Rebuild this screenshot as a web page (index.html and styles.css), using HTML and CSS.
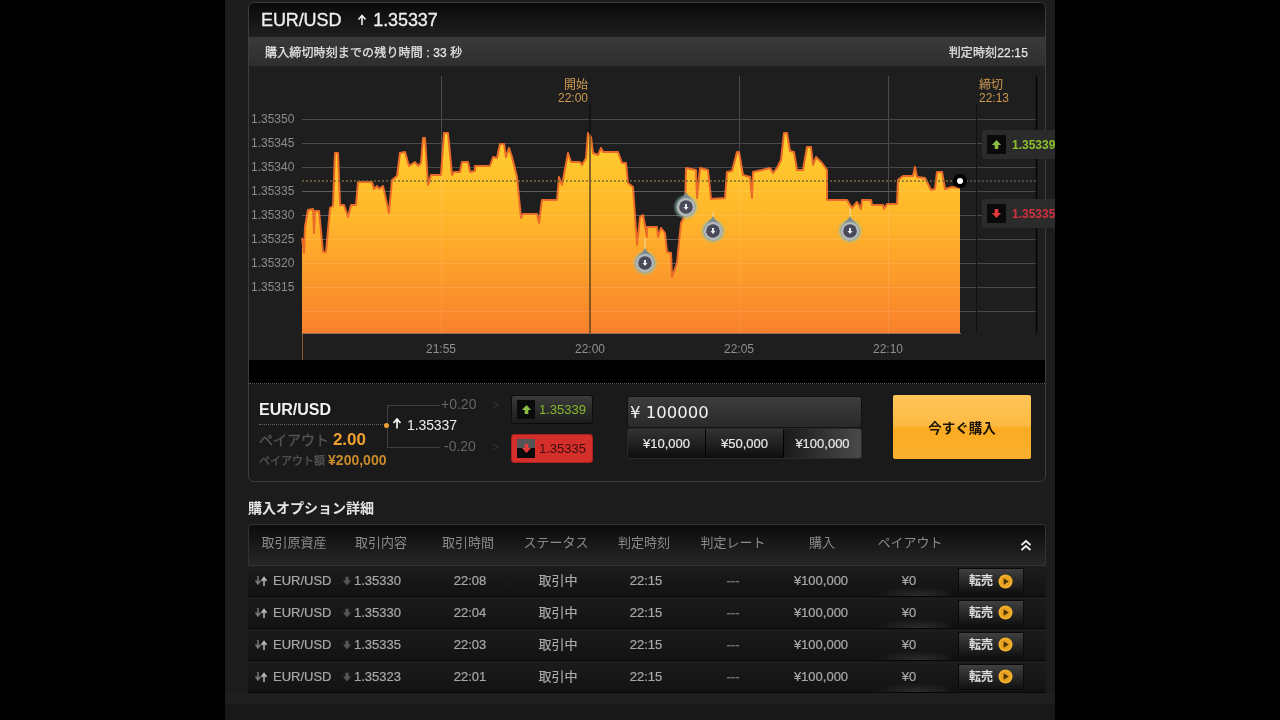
FILE: index.html
```html
<!DOCTYPE html>
<html lang="ja">
<head>
<meta charset="utf-8">
<title>EUR/USD</title>
<link rel="stylesheet" href="styles.css">
</head>
<body>
<svg class="defs" width="0" height="0" aria-hidden="true">
  <defs>
    <linearGradient id="area" x1="0" y1="133" x2="0" y2="333" gradientUnits="userSpaceOnUse">
      <stop offset="0" stop-color="#ffd02f"/>
      <stop offset=".45" stop-color="#ffb42a"/>
      <stop offset="1" stop-color="#f9802c"/>
    </linearGradient>
    <radialGradient id="halo">
      <stop offset=".7" stop-color="#8fc0b4" stop-opacity=".75"/>
      <stop offset="1" stop-color="#8fc0b4" stop-opacity="0"/>
    </radialGradient>
    <symbol id="pin" viewBox="-13 -17 26 30" overflow="visible">
      <circle r="13" fill="url(#halo)"/>
      <path d="M0-15C2-10 9.500-7 9.500 0A9.500 9.500 0 0 1-9.500 0C-9.500-7-2-10 0-15Z" fill="#7d8a8e"/>
      <circle r="9.200" fill="#b4b8b8"/>
      <circle r="6.800" fill="#4a4a5a"/>
      <path d="M-1-3H1V0H2.500L0 3-2.500 0H-1Z" fill="#eee"/>
    </symbol>
    <symbol id="up" viewBox="0 0 12 12"><path d="M6 1 11 6.500H8V11H4V6.500H1Z"/></symbol>
    <symbol id="down" viewBox="0 0 12 12"><path d="M6 11 11 5.500H8V1H4V5.500H1Z"/></symbol>
    <symbol id="thin-up" viewBox="0 0 10 12"><path d="M5 11V2M1.500 5.500 5 1.500 8.500 5.500" fill="none" stroke="currentColor" stroke-width="1.600"/></symbol>
    <symbol id="pair" viewBox="0 0 14 12">
      <path d="M4 1V8M1.500 5.500 4 9 6.500 5.500" fill="none" stroke="#777" stroke-width="1.500"/>
      <path d="M10 11V3M7.500 6 10 2.500 12.500 6" fill="none" stroke="#bbb" stroke-width="1.500"/>
    </symbol>
    <symbol id="sell" viewBox="0 0 16 16">
      <circle cx="8" cy="8" r="7.500" fill="#f2b02c"/>
      <circle cx="8" cy="8" r="5.500" fill="#e9a21f"/>
      <path d="M6 4.500 11.500 8 6 11.500Z" fill="#4a3208"/>
    </symbol>
    <symbol id="dbl-up" viewBox="0 0 12 12">
      <path d="M1.500 5.500 6 1.500 10.500 5.500M1.500 10.500 6 6.500 10.500 10.500" fill="none" stroke="currentColor" stroke-width="1.800"/>
    </symbol>
  </defs>
</svg>

<div class="page">
  <section class="panel">
    <header class="head">
      <span class="pair-name">EUR/USD</span>
      <svg class="head-arrow"><use href="#thin-up"/></svg>
      <span class="head-rate">1.35337</span>
    </header>
    <div class="sub">
      <span>購入締切時刻までの残り時間 : 33 秒</span>
      <span>判定時刻22:15</span>
    </div>

    <div class="chart">
      <svg class="plot" width="798" height="294" viewBox="248 66 798 294">
        <g class="grid">
          <path d="M302 119H1036M302 143H1036M302 167H1036M302 191H1036M302 215H1036M302 239H1036M302 263H1036M302 287H1036M302 311H1036"/>
          <path d="M441 76V333M739 76V333M888 76V333"/>
        </g>
        <path class="area" d="M302 238L304 253 305 227 308 210 313 209 314 233 315 211 319 211 323 252 326 252 330 208 333 206 335 153 338 153 340 205 344 205 348 217 351 205 356 205 358 182 372 182 374 189 377 186 379 189 383 186 389 213 392 180 397 176 400 153 405 152 409 166 415 162 418 166 421 163 423 138 425 138 428 185 431 175 441 175 444 133 448 133 452 175 454 172 460 172 462 162 468 162 470 172 475 171 475 166 490 166 493 157 497 158 500 144 504 144 506 157 509 148 512 157 517 177 521 218 523 214 537 214 539 223 542 200 557 200 559 177 562 185 568 153 571 162 580 162 582 165 586 158 588 133 591 137 593 153 598 155 601 148 603 152 618 152 622 163 626 163 628 183 633 187 637 245 640 217 643 215 647 237 647 227 657 227 658 237 661 228 665 233 667 252 671 253 672 277 677 263 681 223 685 215 686 168 696 170 697 198 700 168 708 170 711 199 725 198 727 172 732 171 737 152 739 152 743 175 750 177 752 198 753 172 762 170 770 168 773 173 777 168 781 160 784 133 787 133 790 151 794 152 797 170 803 170 807 147 811 147 813 165 816 157 822 163 827 170 827 200 847 200 852 208 857 202 861 209 862 200 871 200 872 205 883 205 884 209 887 204 897 204 898 180 903 176 913 176 915 167 917 177 925 178 931 190 935 189 937 172 942 172 945 189 952 187 960 188V333H302Z"/>
        <path class="area-edge" d="M302 238L304 253 305 227 308 210 313 209 314 233 315 211 319 211 323 252 326 252 330 208 333 206 335 153 338 153 340 205 344 205 348 217 351 205 356 205 358 182 372 182 374 189 377 186 379 189 383 186 389 213 392 180 397 176 400 153 405 152 409 166 415 162 418 166 421 163 423 138 425 138 428 185 431 175 441 175 444 133 448 133 452 175 454 172 460 172 462 162 468 162 470 172 475 171 475 166 490 166 493 157 497 158 500 144 504 144 506 157 509 148 512 157 517 177 521 218 523 214 537 214 539 223 542 200 557 200 559 177 562 185 568 153 571 162 580 162 582 165 586 158 588 133 591 137 593 153 598 155 601 148 603 152 618 152 622 163 626 163 628 183 633 187 637 245 640 217 643 215 647 237 647 227 657 227 658 237 661 228 665 233 667 252 671 253 672 277 677 263 681 223 685 215 686 168 696 170 697 198 700 168 708 170 711 199 725 198 727 172 732 171 737 152 739 152 743 175 750 177 752 198 753 172 762 170 770 168 773 173 777 168 781 160 784 133 787 133 790 151 794 152 797 170 803 170 807 147 811 147 813 165 816 157 822 163 827 170 827 200 847 200 852 208 857 202 861 209 862 200 871 200 872 205 883 205 884 209 887 204 897 204 898 180 903 176 913 176 915 167 917 177 925 178 931 190 935 189 937 172 942 172 945 189 952 187 960 188"/>
        <path class="grid-over" d="M302 191H960M302 215H960M302 239H960M302 263H960M302 287H960M302 311H960M441 175V333M739 152V333M888 204V333"/>
        <path class="axis" d="M302 333.500H961"/>
        <path class="open-top" d="M590 104V134"/>
        <path class="open-line" d="M590 134V333"/>
        <path class="close-line" d="M976.500 104V333"/>
        <path class="limit-line" d="M1036.500 76V333"/>
        <path class="tick" d="M302.500 334V360"/>
        <path class="now" d="M302 181H1036"/>
        <path class="now-over" d="M302 181H960"/>
        <path class="pin-stem" d="M645 238V250M713 212V220M850 208V218"/>
        <use href="#pin" x="632" y="246" width="26" height="30"/>
        <use href="#pin" x="673" y="190" width="26" height="30"/>
        <use href="#pin" x="700" y="214" width="26" height="30"/>
        <use href="#pin" x="837" y="214" width="26" height="30"/>
        <circle cx="960" cy="181" r="7" fill="#000"/>
        <circle cx="960" cy="181" r="3" fill="#fff"/>
        <g class="price-labels">
          <text x="251" y="123">1.35350</text>
          <text x="251" y="147">1.35345</text>
          <text x="251" y="171">1.35340</text>
          <text x="251" y="195">1.35335</text>
          <text x="251" y="219">1.35330</text>
          <text x="251" y="243">1.35325</text>
          <text x="251" y="267">1.35320</text>
          <text x="251" y="291">1.35315</text>
        </g>
        <g class="time-labels">
          <text x="441" y="353">21:55</text>
          <text x="590" y="353">22:00</text>
          <text x="739" y="353">22:05</text>
          <text x="888" y="353">22:10</text>
        </g>
        <g class="mark-labels">
          <text x="588" y="89" text-anchor="end">開始</text>
          <text x="588" y="102" text-anchor="end">22:00</text>
          <text x="979" y="89">締切</text>
          <text x="979" y="102">22:13</text>
        </g>
      </svg>
      <div class="tag tag-up">
        <span class="tag-icon"><svg class="i12 green"><use href="#up"/></svg></span>
        <span>1.35339</span>
      </div>
      <div class="tag tag-down">
        <span class="tag-icon"><svg class="i12 red"><use href="#down"/></svg></span>
        <span>1.35335</span>
      </div>
    </div>
    <div class="band"></div>

    <div class="order">
      <div class="order-info">
        <div class="order-pair">EUR/USD</div>
        <div class="order-pay"><span class="muted">ペイアウト</span> <b>2.00</b></div>
        <div class="order-amt"><span class="muted">ペイアウト額</span> <b>¥200,000</b></div>
      </div>
      <div class="spread">
        <i class="spread-dot"></i>
        <span class="spread-top">+0.20</span>
        <span class="spread-rate"><svg class="i-thin"><use href="#thin-up"/></svg>1.35337</span>
        <span class="spread-bot">-0.20</span>
        <span class="chev chev-top">&gt;</span>
        <span class="chev chev-bot">&gt;</span>
      </div>
      <div class="rates">
        <div class="rate rate-up">
          <span class="rate-icon"><svg class="i12 green"><use href="#up"/></svg></span>1.35339
        </div>
        <div class="rate rate-down">
          <span class="rate-icon red-icon"><svg class="i12 red"><use href="#down"/></svg></span>1.35335
        </div>
      </div>
      <div class="amount">
        <div class="amount-input">¥ 100000</div>
        <div class="amount-btns">
          <span>¥10,000</span>
          <span>¥50,000</span>
          <span class="on">¥100,000</span>
        </div>
      </div>
      <div class="buy">今すぐ購入</div>
    </div>
  </section>

  <h2 class="title">購入オプション詳細</h2>

  <div class="thead">
    <span>取引原資産</span><span>取引内容</span><span>取引時間</span><span>ステータス</span><span>判定時刻</span><span>判定レート</span><span>購入</span><span>ペイアウト</span>
    <span class="collapse"><svg class="i-dbl"><use href="#dbl-up"/></svg></span>
  </div>

  <div class="rows">
    <div class="row">
      <span class="c-pair"><svg class="i-pair"><use href="#pair"/></svg>EUR/USD</span>
      <span class="c-rate"><svg class="i-dn"><use href="#down"/></svg>1.35330</span>
      <span>22:08</span><span class="cjk">取引中</span><span>22:15</span><span class="dash">---</span><span>¥100,000</span><span class="zero">¥0</span>
      <span class="c-btn"><span class="sell">転売<svg class="i-sell"><use href="#sell"/></svg></span></span>
    </div>
    <div class="row">
      <span class="c-pair"><svg class="i-pair"><use href="#pair"/></svg>EUR/USD</span>
      <span class="c-rate"><svg class="i-dn"><use href="#down"/></svg>1.35330</span>
      <span>22:04</span><span class="cjk">取引中</span><span>22:15</span><span class="dash">---</span><span>¥100,000</span><span class="zero">¥0</span>
      <span class="c-btn"><span class="sell">転売<svg class="i-sell"><use href="#sell"/></svg></span></span>
    </div>
    <div class="row">
      <span class="c-pair"><svg class="i-pair"><use href="#pair"/></svg>EUR/USD</span>
      <span class="c-rate"><svg class="i-dn"><use href="#down"/></svg>1.35335</span>
      <span>22:03</span><span class="cjk">取引中</span><span>22:15</span><span class="dash">---</span><span>¥100,000</span><span class="zero">¥0</span>
      <span class="c-btn"><span class="sell">転売<svg class="i-sell"><use href="#sell"/></svg></span></span>
    </div>
    <div class="row">
      <span class="c-pair"><svg class="i-pair"><use href="#pair"/></svg>EUR/USD</span>
      <span class="c-rate"><svg class="i-dn"><use href="#down"/></svg>1.35323</span>
      <span>22:01</span><span class="cjk">取引中</span><span>22:15</span><span class="dash">---</span><span>¥100,000</span><span class="zero">¥0</span>
      <span class="c-btn"><span class="sell">転売<svg class="i-sell"><use href="#sell"/></svg></span></span>
    </div>
  </div>
  <div class="page-foot"></div>
</div>
</body>
</html>
```

FILE: styles.css
```css
* { box-sizing: border-box; }
html, body { margin: 0; height: 720px; overflow: hidden; background: #000; }
body {
  font-family: "Liberation Sans", "Noto Sans CJK JP", sans-serif;
  color: #ddd;
}
.defs { position: absolute; }

.page {
  width: 830px;
  height: 720px;
  margin-left: 225px;
  padding: 2px 0 0 23px;
  background: #1c1c1c;
  overflow: hidden;
  display: flex;
  flex-direction: column;
  align-items: flex-start;
  filter: blur(.4px);
}

/* main panel */
.panel {
  width: 798px;
  height: 480px;
  flex: none;
  border: 1px solid #3d3d3d;
  border-radius: 6px;
  background: #1a1a1a;
  display: flex;
  flex-direction: column;
}
.head {
  height: 34px;
  flex: none;
  display: flex;
  align-items: center;
  padding-left: 12px;
  border-radius: 5px 5px 0 0;
  background: linear-gradient(#0a0a0a, #1f1f1f);
  font-size: 18px;
  letter-spacing: -.1px;
  color: #f0f0f0;
  -webkit-text-stroke: .3px #f0f0f0;
}
.head-arrow { width: 10px; height: 12px; margin: 0 6px 0 16px; color: #eee; }
.sub {
  height: 29px;
  flex: none;
  display: flex;
  justify-content: space-between;
  align-items: center;
  padding: 0 17px 0 16px;
  background: linear-gradient(#3a3a3a, #2e2e2e);
  font-size: 12px;
  letter-spacing: .14px;
  color: #e4e4e4;
  -webkit-text-stroke: .25px #e4e4e4;
}

/* chart */
.chart { position: relative; height: 294px; flex: none; background: #1e1e1f; }
.plot { display: block; margin-left: -1px; font-family: "Liberation Sans", "Noto Sans CJK JP", sans-serif; }
.grid path { stroke: #4a4a4a; stroke-width: 1; fill: none; shape-rendering: crispEdges; }
.grid-over { stroke: rgba(255,255,255,.1); fill: none; shape-rendering: crispEdges; }
.area { fill: url(#area); }
.area-edge { fill: none; stroke: #ea6a28; stroke-width: 2; stroke-linejoin: round; }
.axis { stroke: #8a6d5a; fill: none; }
.open-top { stroke: #111; stroke-width: 1.5; fill: none; }
.open-line { stroke: #5a4322; stroke-width: 1.5; fill: none; }
.close-line { stroke: #111; fill: none; }
.limit-line { stroke: #050505; stroke-width: 1.500; fill: none; }
.tick { stroke: #8a5a30; fill: none; }
.now { stroke: #7a7a7a; stroke-dasharray: 2 2; fill: none; }
.now-over { stroke: #7a6320; stroke-dasharray: 2 2; fill: none; }
.pin-stem { stroke: #e8d9a8; fill: none; }
.price-labels text { fill: #8c8c8c; font-size: 12px; }
.time-labels text { fill: #8f8f8f; font-size: 12px; text-anchor: middle; }
.mark-labels text { fill: #cf9a52; font-size: 12px; }

.tag {
  position: absolute;
  left: 733px;
  width: 90px;
  height: 29px;
  display: flex;
  align-items: center;
  gap: 6px;
  padding-left: 5px;
  background: #2b2b2b;
  border-radius: 3px;
  font-size: 12px;
  font-weight: bold;
  white-space: nowrap;
}
.tag-up { top: 64px; color: #8cc22c; }
.tag-down { top: 133px; color: #d63040; }
.tag-icon {
  width: 19px; height: 19px;
  background: #0a0a0a;
  display: flex; align-items: center; justify-content: center;
}
.i12 { width: 11px; height: 11px; display: block; }
.green { fill: #8bbb45; }
.red { fill: #e23a3a; }

.band { height: 24px; flex: none; background: #000; border-bottom: 1px dotted #555; }

/* order row */
.order {
  flex: 1;
  display: flex;
  align-items: flex-start;
  padding: 11px 0 0 10px;
}
.order-info { width: 128px; flex: none; }
.order-pair {
  height: 30px;
  padding-top: 5px;
  font-size: 16px;
  font-weight: bold;
  line-height: 20px;
  color: #f2f2f2;
  border-bottom: 1px dotted #666;
}
.order-pay { margin-top: 5px; font-size: 14px; line-height: 20px; white-space: nowrap; }
.order-pay b { font-size: 17px; color: #f0a030; }
.order-amt { margin-top: 1px; font-size: 11px; line-height: 18px; white-space: nowrap; }
.order-amt b { font-size: 14px; color: #c98a2c; }
.muted { color: #555; -webkit-text-stroke: .3px #555; }

.spread {
  position: relative;
  width: 124px;
  height: 60px;
  flex: none;
  font-size: 14px;
}
.spread::before {
  content: "";
  position: absolute;
  left: 0; top: 10px;
  width: 52px; height: 41px;
  border: 1px solid #3f3f3f;
  border-right: 0;
}
.spread-dot {
  position: absolute;
  left: -3px; top: 28px;
  width: 5px; height: 5px;
  border-radius: 50%;
  background: #f0a030;
}
.spread-top, .spread-bot { position: absolute; left: 54px; color: #666; }
.spread-top { top: 1px; }
.spread-bot { top: 43px; left: 57px; }
.spread-rate {
  position: absolute;
  left: 5px; top: 22px;
  display: flex; align-items: center; gap: 5px;
  letter-spacing: -.1px;
  color: #eee; font-size: 14px;
}
.i-thin { width: 10px; height: 13px; margin-top: -4px; color: #fff; }
.chev { position: absolute; left: 105px; color: #333; font-size: 12px; }
.chev-top { top: 3px; }
.chev-bot { top: 45px; }

.rates { width: 116px; flex: none; display: flex; flex-direction: column; gap: 10px; }
.rate {
  width: 82px; height: 29px;
  display: flex; align-items: center; gap: 4px;
  padding-left: 5px;
  border-radius: 3px;
  font-size: 13px;
  white-space: nowrap;
}
.rate-up {
  background: linear-gradient(#3b3b3b, #1c1c1c);
  border: 1px solid #0c0c0c;
  color: #86b52c;
}
.rate-down {
  background: #d42f2b;
  border: 1px solid #a82020;
  color: #3d0d0d;
}
.rate-icon {
  width: 18px; height: 19px;
  background: #0a0a0a;
  display: flex; align-items: center; justify-content: center;
}
.red-icon { background: linear-gradient(#555 0 45%, #0a0a0a 45%); }

.amount { width: 235px; flex: none; margin-top: 1px; }
.amount-input {
  height: 32px;
  padding-left: 2px;
  border: 1px solid #111;
  border-radius: 3px;
  background: linear-gradient(#3c3c3c, #2a2a2a);
  font-family: "DejaVu Sans", sans-serif;
  font-size: 16.5px;
  line-height: 32px;
  color: #f0f0f0;
}
.amount-btns {
  height: 31px;
  display: grid;
  grid-template-columns: 78px 78px 1fr;
  border: 1px solid #2a2a2a;
  border-radius: 3px;
  overflow: hidden;
}
.amount-btns span {
  display: flex; align-items: center; justify-content: center;
  background: linear-gradient(#333, #0e0e0e);
  border-right: 1px solid #000;
  font-size: 13px;
  color: #e6e6e6;
  -webkit-text-stroke: .2px #e6e6e6;
}
.amount-btns .on { background: linear-gradient(90deg, #1a1a1a, #4a4a4a); border-right: 0; }

.buy {
  width: 138px; height: 64px;
  flex: none;
  margin-left: 31px;
  display: flex; align-items: center; justify-content: center;
  border-radius: 2px;
  background: linear-gradient(#ffc558, #fdba42 48%, #fbab22 52%, #fbb02e);
  font-size: 13.5px;
  font-weight: bold;
  color: #1a1206;
}

/* table */
.title {
  margin: 17px 0 6px;
  height: 19px;
  font-size: 14px;
  font-weight: bold;
  line-height: 19px;
  color: #e4e4e4;
}
.thead {
  width: 798px;
  height: 42px;
  flex: none;
  padding-bottom: 8px;
  display: grid;
  grid-template-columns: 92px 82px 92px 84px 92px 86px 92px 84px 94px;
  align-items: center;
  text-align: center;
  box-shadow: inset 0 0 0 1px #333;
  border-radius: 4px 4px 0 0;
  background: linear-gradient(#0b0b0b, #272727);
  font-size: 13px;
  color: #8a8a8a;
}
.collapse { display: flex; justify-content: flex-end; padding: 8px 14px 0 0; color: #eee; }
.i-dbl { width: 12px; height: 13px; }
.rows { width: 798px; flex: none; }
.row {
  height: 32px;
  display: grid;
  grid-template-columns: 92px 82px 96px 80px 96px 78px 98px 78px 98px;
  align-items: center;
  text-align: center;
  background: linear-gradient(#1c1c1c, #121212);
  border-bottom: 1px solid #060606;
  font-size: 13px;
  line-height: 16px;
  color: #a8a8a8;
  -webkit-text-stroke: .2px #a8a8a8;
}
.row:first-child { height: 31px; }
.c-pair { display: flex; align-items: center; padding-left: 6px; gap: 5px; }
.c-rate { display: flex; align-items: center; padding-left: 2px; gap: 2px; }
.i-pair { width: 14px; height: 12px; flex: none; }
.i-dn { width: 10px; height: 10px; fill: #555; flex: none; }
.dash { color: #777; -webkit-text-stroke: .4px #777; }
.zero {
  align-self: stretch;
  display: flex; align-items: center; justify-content: center;
  background: radial-gradient(55% 10px at 60% 100%, #2c2c2c, transparent);
}
.c-btn { display: flex; padding-left: 10px; }
.sell {
  width: 66px; height: 26px;
  display: flex; align-items: center; justify-content: center; gap: 5px;
  background: linear-gradient(#3f3f3f, #111);
  border: 1px solid #0a0a0a;
  font-size: 12px;
  font-weight: bold;
  color: #ddd;
}
.i-sell { width: 15px; height: 15px; }
.page-foot {
  flex: 1;
  align-self: stretch;
  margin-left: -23px;
  background: linear-gradient(#1f1f1f 0 11px, #181818 11px);
}
```
